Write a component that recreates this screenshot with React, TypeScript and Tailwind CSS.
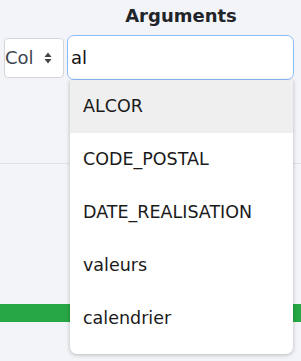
import { useState } from "react";

const options = ["ALCOR", "CODE_POSTAL", "DATE_REALISATION", "valeurs", "calendrier"];

const App = () => {
    const [query, setQuery] = useState("al");
    const [active, setActive] = useState(0);

    return (
        <div className="relative w-[301px] h-[361px] overflow-hidden bg-[#f3f4f8] font-['DejaVu_Sans',sans-serif] text-[#212529]">
            {/* Header */}
            <div className="flex h-[35px]">
                <div className="w-[68px]"></div>
                <h2 className="flex-1 mr-[7px] pt-[4px] text-center text-[18px] leading-[24px] font-bold">
                    Arguments
                </h2>
            </div>

            {/* Select + input row */}
            <div className="flex items-start pl-[4px]">
                <div className="mt-[3px] w-[60px] h-[40px] flex items-center bg-white border border-[#d4d6dc] rounded-[4px] overflow-hidden">
                    <span className="text-[18px] leading-none text-[#3d4450]">Col</span>
                    <svg width="8" height="12" viewBox="0 0 8 12" className="ml-[10px]">
                        <path d="M4 0.5 L7.5 5 L0.5 5 Z" fill="#444" />
                        <path d="M4 11.5 L7.5 7 L0.5 7 Z" fill="#444" />
                    </svg>
                </div>
                <input
                    value={query}
                    onChange={(e) => setQuery(e.target.value)}
                    className="ml-[3px] w-[227px] h-[45px] px-[3px] bg-white border border-[#8cbcf8] rounded-[7px] text-[18px] text-[#111] outline-none"
                />
            </div>

            {/* Background content */}
            <div className="mt-[83px] border-t border-[#dfe1e6]"></div>
            <div className="mt-[140px] h-[18px] bg-[#28a745]"></div>

            {/* Autocomplete list */}
            <ul className="absolute left-[70px] top-[80px] w-[223px] pb-[9px] bg-white rounded-b-[7px] shadow-[0_1px_4px_rgba(0,0,0,0.25)]">
                {options.map((opt, i) => (
                    <li
                        key={opt}
                        onMouseEnter={() => setActive(i)}
                        className={`h-[53px] flex items-center pl-[13px] text-[17.5px] text-[#1a1a1a] ${i === active ? "bg-[#efefef]" : ""}`}
                    >
                        {opt}
                    </li>
                ))}
            </ul>
        </div>
    );
};

export default App;
